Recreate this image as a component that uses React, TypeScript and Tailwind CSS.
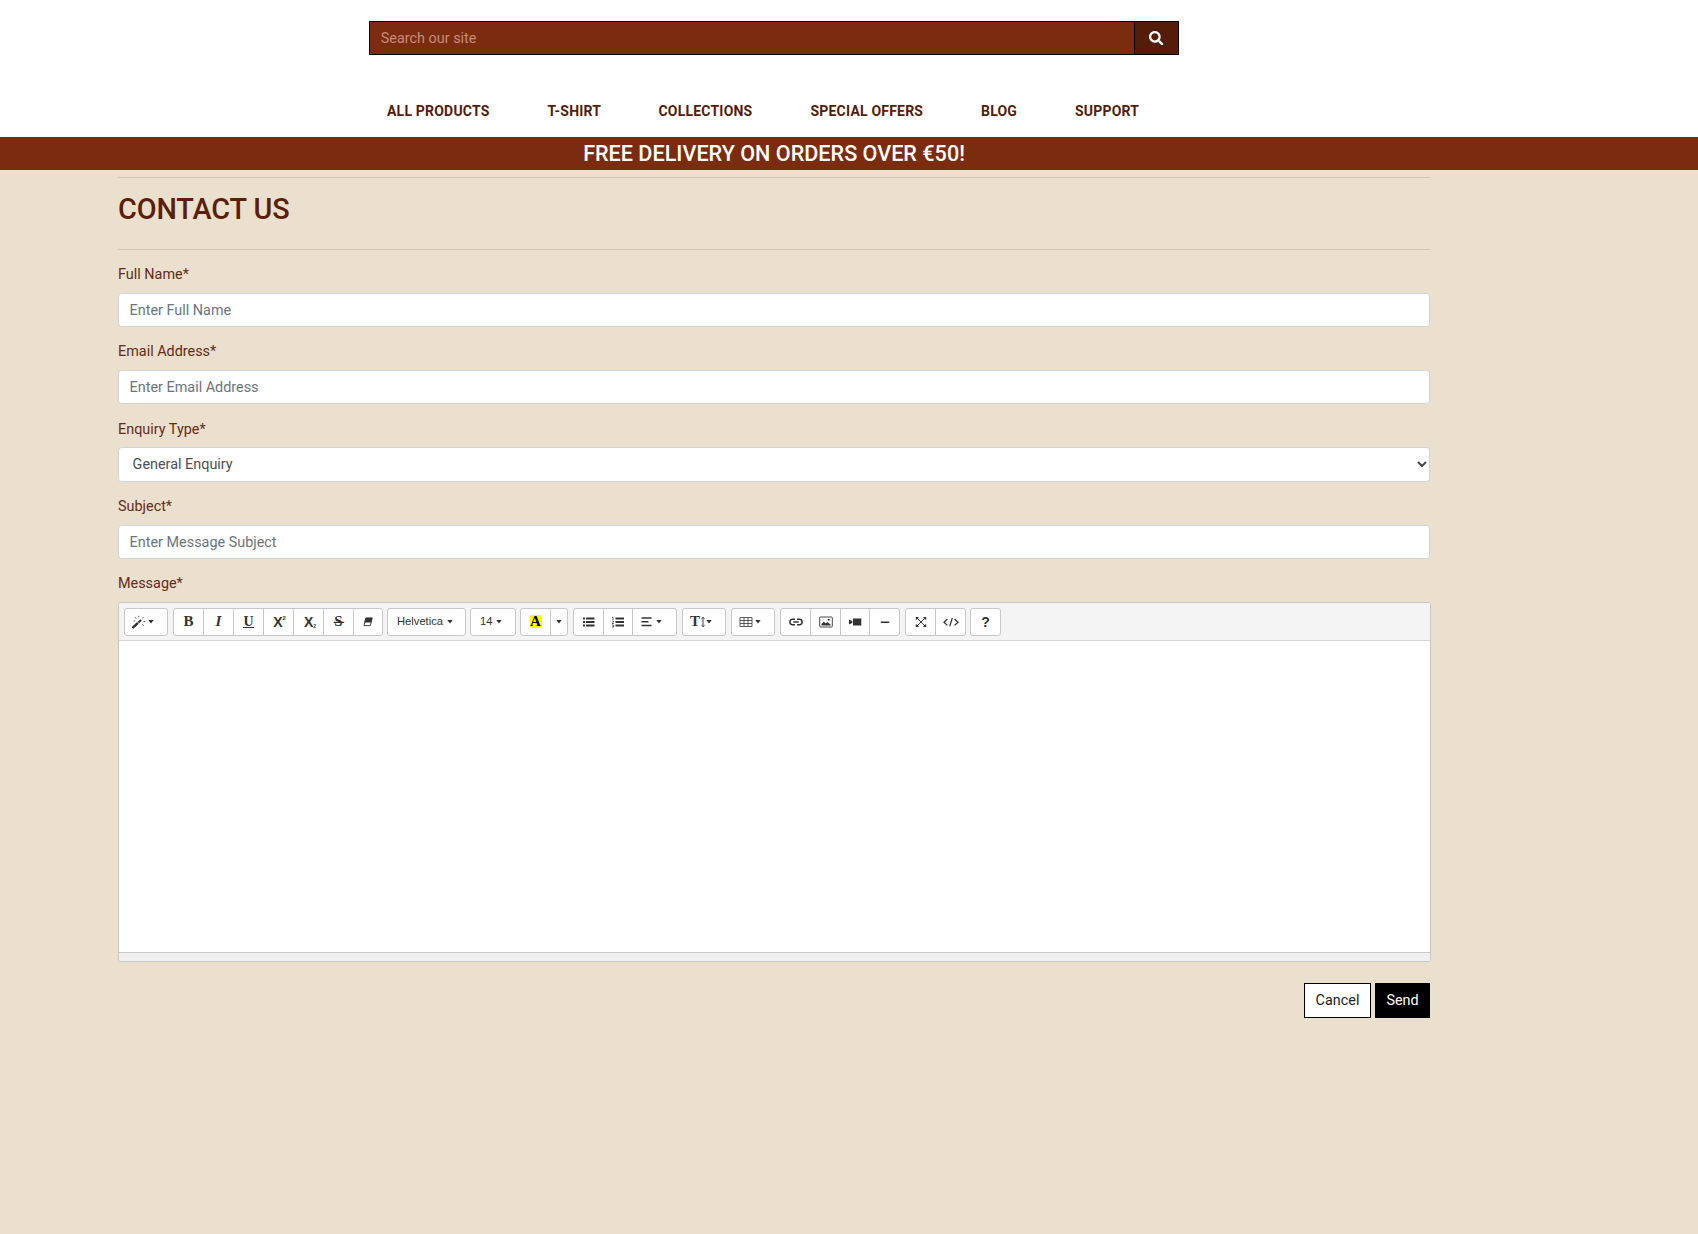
import type { ReactNode } from "react";
import { FaSearch } from "react-icons/fa";

const NAV = [
  { label: "ALL PRODUCTS", width: "w-[160.5px]" },
  { label: "T-SHIRT", width: "w-[111px]" },
  { label: "COLLECTIONS", width: "w-[152px]" },
  { label: "SPECIAL OFFERS", width: "w-[170.5px]" },
  { label: "BLOG", width: "w-[94px]" },
  { label: "SUPPORT", width: "w-[80px]" },
];

function Glyph({ children, className = "" }: { children: ReactNode; className?: string }) {
  return (
    <svg viewBox="0 0 14 14" className={`h-[14px] w-[14px] shrink-0 ${className}`} fill="none" stroke="#333" strokeWidth="1.5">
      {children}
    </svg>
  );
}

function Caret() {
  return (
    <svg viewBox="0 0 6 4" className="h-[4px] w-[6px] shrink-0" fill="#333">
      <path d="M.3 0h5.4L3 3.4z" />
    </svg>
  );
}

function Group({ children }: { children: ReactNode }) {
  return (
    <div className="flex h-7 divide-x divide-[#c6c8ca] overflow-hidden rounded-[3px] border border-[#c6c8ca] bg-white text-[#333]">
      {children}
    </div>
  );
}

function Tool({ children, width = "w-[30px]" }: { children: ReactNode; width?: string }) {
  return <button className={`flex shrink-0 items-center justify-center ${width}`}>{children}</button>;
}

function DropTool({ children, width = "w-[42px]" }: { children: ReactNode; width?: string }) {
  return (
    <button className={`flex shrink-0 items-center pl-[7px] ${width}`}>
      {children}
      <Caret />
    </button>
  );
}

function Field({ label, placeholder, inset = "" }: { label: string; placeholder: string; inset?: string }) {
  return (
    <div className="mb-[14.2px]">
      <label className="mb-[7.2px] block text-[#652b17]">{label}</label>
      <input
        className={`block h-[34.2px] w-full rounded-[3.6px] border border-[#ced4da] bg-white px-[10.6px] placeholder:text-[#6c757d] ${inset}`}
        placeholder={placeholder}
      />
    </div>
  );
}

function Toolbar() {
  const serif = "font-['Liberation_Serif'] text-[15px] leading-none font-bold";
  const sans = "font-['Liberation_Sans'] text-[11.2px] leading-none";
  return (
    <div className="flex h-[38px] gap-[4px] border-b border-[#d5d5d5] bg-[#f4f4f4] pt-[5px] pl-[5px]">
      <div className="mr-px flex">
        <Group>
          <DropTool>
            <Glyph className="mr-[2px]">
              <path d="M.6 12.8 6 7.8" strokeWidth="2.5" />
              <path d="M6.4 7.4 9 5" strokeWidth="2.1" />
              <path d="M6.8.8v1.6M2.8 2l1.2 1.4M11.5 2l-1.2 1.4M11.6 6.5h1.8M10.4 9.3l1.2 1.5M1.6 6h1.6" strokeWidth=".8" />
            </Glyph>
          </DropTool>
        </Group>
      </div>
      <Group>
        <Tool><span className={serif}>B</span></Tool>
        <Tool><span className={`${serif} italic`}>I</span></Tool>
        <Tool>
          <span className="border-b border-[#333] font-['Liberation_Serif'] text-[14px] leading-[11px] font-bold">U</span>
        </Tool>
        <Tool>
          <span className="ml-[2px] flex items-center font-['Liberation_Sans'] text-[14px] leading-none font-bold">
            X<span className="mb-[8px] text-[6px] leading-none">2</span>
          </span>
        </Tool>
        <Tool>
          <span className="ml-[3px] flex items-center font-['Liberation_Sans'] text-[14px] leading-none font-bold">
            X<span className="mt-[10px] text-[5px] leading-none">2</span>
          </span>
        </Tool>
        <Tool>
          <svg viewBox="0 0 12 14" className="absolute h-[14px] w-[12px]" stroke="#333" strokeWidth="1.2">
            <path d="M.8 7.4h10.4" />
          </svg>
          <span className={serif}>S</span>
        </Tool>
        <Tool width="w-[28px]">
          <Glyph>
            <path d="M4.8 3h6.4L9.4 10.6H3z" strokeWidth=".9" />
            <path d="M4.6 2.8h6.8l-1.2 4.8H3.4z" fill="#333" stroke="none" />
          </Glyph>
        </Tool>
      </Group>
      <Group>
        <DropTool width="w-[77px]"><span className={`${sans} mr-[4px] ml-[2px]`}>Helvetica</span></DropTool>
      </Group>
      <Group>
        <DropTool width="w-[44px]"><span className={`${sans} mr-[4px] ml-[2px]`}>14</span></DropTool>
      </Group>
      <div className="mr-px flex">
        <Group>
          <Tool>
            <span className="flex h-[13px] w-[12px] items-center justify-center bg-[#ffff00] font-['Liberation_Serif'] text-[15px] leading-none font-bold text-black">A</span>
          </Tool>
          <Tool width="w-[16px]"><Caret /></Tool>
        </Group>
      </div>
      <div className="mr-px flex">
        <Group>
          <Tool>
            <Glyph>
              <path d="M1 3.5h2M1 7h2M1 10.5h2M4 3.5h8.5M4 7h8.5M4 10.5h8.5" strokeWidth="1.8" />
            </Glyph>
          </Tool>
          <Tool width="w-[29px]">
            <Glyph>
              <path d="M4.5 3.5h8.5M4.5 7h8.5M4.5 10.5h8.5" strokeWidth="1.8" />
              <path d="M1 2.6l1-.6v3M1 6h1.5v1.2L1 8.5h2M1 10h1.7v2H1M1.6 11h1" strokeWidth=".7" />
            </Glyph>
          </Tool>
          <DropTool width="w-[43px]">
            <Glyph className="mr-[2px]">
              <path d="M1.5 3h10M1.5 6.8h7M1.5 10.6h10" />
            </Glyph>
          </DropTool>
        </Group>
      </div>
      <div className="mr-px flex">
        <Group>
          <DropTool>
            <span className={serif}>T</span>
            <svg viewBox="0 0 6 14" className="h-[14px] w-[6px]" fill="none" stroke="#333" strokeWidth=".9">
              <path d="M3 2.5v9M1.4 3.8 3 2.3l1.6 1.5M1.4 10.2 3 11.7l1.6-1.5" />
            </svg>
          </DropTool>
        </Group>
      </div>
      <div className="mr-px flex">
        <Group>
          <DropTool>
            <Glyph className="mr-[2px]">
              <path d="M1 2.5h12v9H1zM1 5.5h12M1 8.5h12M5 2.5v9M9 2.5v9" strokeWidth=".8" />
            </Glyph>
          </DropTool>
        </Group>
      </div>
      <div className="mr-px flex">
        <Group>
          <Tool>
            <Glyph>
              <path d="M6 4.3H3.6a2.7 2.7 0 0 0 0 5.4H6M8 4.3h2.4a2.7 2.7 0 0 1 0 5.4H8M4.3 7h5.4" />
            </Glyph>
          </Tool>
          <Tool>
            <Glyph>
              <rect x=".7" y="2" width="12.6" height="10" rx=".8" strokeWidth=".9" />
              <path d="M2.5 10.5V9l2.3-2.2 1.9 1.8L8.2 7l3.4 2.5v1z" fill="#333" stroke="none" />
              <circle cx="9.8" cy="4.8" r="1" fill="#333" stroke="none" />
            </Glyph>
          </Tool>
          <Tool width="w-[29px]">
            <Glyph>
              <path d="M4.9 3.5h8.4v7H4.9zM.9 4.5 4.2 6v2L.9 9.5z" fill="#333" stroke="none" />
            </Glyph>
          </Tool>
          <Tool width="w-[29px]">
            <Glyph><path d="M2.8 7.2h8.4" strokeWidth="1.6" /></Glyph>
          </Tool>
        </Group>
      </div>
      <Group>
        <Tool>
          <Glyph>
            <path d="m3 3 8 8M11 3l-8 8" strokeWidth="1" />
            <path d="M1.8 2h3.3L1.8 5.3zM12.2 2v3.3L8.9 2zM1.8 12V8.7L5.1 12zM12.2 12H8.9l3.3-3.3z" fill="#333" stroke="none" />
          </Glyph>
        </Tool>
        <Tool width="w-[29px]">
          <svg viewBox="0 0 18 14" className="h-[14px] w-[18px]" fill="none" stroke="#333" strokeWidth="1.3">
            <path d="M5.4 4 2 7.2l3.4 3.2M12.6 4 16 7.2l-3.4 3.2M10.3 3 7.7 11.4" />
          </svg>
        </Tool>
      </Group>
      <Group>
        <Tool width="w-[29px]"><span className="font-['Liberation_Sans'] text-[14px] leading-none font-bold">?</span></Tool>
      </Group>
    </div>
  );
}

export default function App() {
  return (
    <div className="min-h-screen bg-[#ebdfcd] font-['Roboto',sans-serif] text-[14.4px] leading-[21.6px]">
      <header className="h-[137px] bg-white pt-[21px]">
        <form className="ml-[369px] flex h-[34px] w-[810px] border border-black bg-[#7b2c0e]">
          <input
            className="min-w-0 flex-1 px-[10.8px] pt-px text-white placeholder:text-[#c58d79]"
            placeholder="Search our site"
          />
          <button type="button" className="flex w-[44px] items-center justify-center border-l border-black bg-[#541c09]">
            <FaSearch className="h-[14.4px] w-[14.4px] text-white" />
          </button>
        </form>
        <nav className="mt-[46px] ml-[387px] flex text-[14px] font-bold tracking-[0.2px] text-[#541c09]">
          {NAV.map((item) => (
            <a key={item.label} className={`${item.width} shrink-0 whitespace-nowrap`}>{item.label}</a>
          ))}
        </nav>
      </header>
      <div className="flex h-[33px] items-center bg-[#7b2c0e]">
        <h4 className="w-[1548px] text-center text-[21.6px] font-medium text-white">FREE DELIVERY ON ORDERS OVER €50!</h4>
      </div>
      <main className="ml-[118px] w-[1312px] pt-[7px]">
        <hr className="border-[#d4c7b8]" />
        <h2 className="mt-[14px] h-[57px] text-[28.8px] leading-[35px] font-medium tracking-[-0.1px] text-[#5a1e09]">CONTACT US</h2>
        <hr className="mb-[14.2px] border-[#d4c7b8]" />
        <Field label="Full Name*" placeholder="Enter Full Name" />
        <Field label="Email Address*" placeholder="Enter Email Address" />
        <div className="mb-[14.4px]">
          <label className="mb-[7.2px] block text-[#652b17]">Enquiry Type*</label>
          <div className="flex h-[34.4px] items-center justify-between rounded-[3.6px] border border-[#ced4da] bg-white pt-px pr-[2px] pl-[13.6px] text-[#495057]">
            General Enquiry
            <svg viewBox="0 0 10 6" className="mb-px h-[6px] w-[10px]" fill="none" stroke="#444" strokeWidth="2">
              <path d="m1 1 4 4 4-4" />
            </svg>
          </div>
        </div>
        <Field label="Subject*" placeholder="Enter Message Subject" inset="pt-px" />
        <label className="mb-[7px] block text-[#652b17]">Message*</label>
        <div className="h-[360px] w-[1313px] overflow-hidden rounded-[3px] border border-[#c6c8ca] bg-white">
          <Toolbar />
          <div className="h-[311px]" />
          <div className="h-[9px] border-t border-[#c6c8ca] bg-[#f0f0f0]" />
        </div>
        <div className="mt-[21px] flex justify-end gap-1">
          <button className="h-[35px] w-[67px] border border-black bg-white text-[#222]">Cancel</button>
          <button className="h-[35px] w-[55px] border border-black bg-black text-white">Send</button>
        </div>
      </main>
    </div>
  );
}
